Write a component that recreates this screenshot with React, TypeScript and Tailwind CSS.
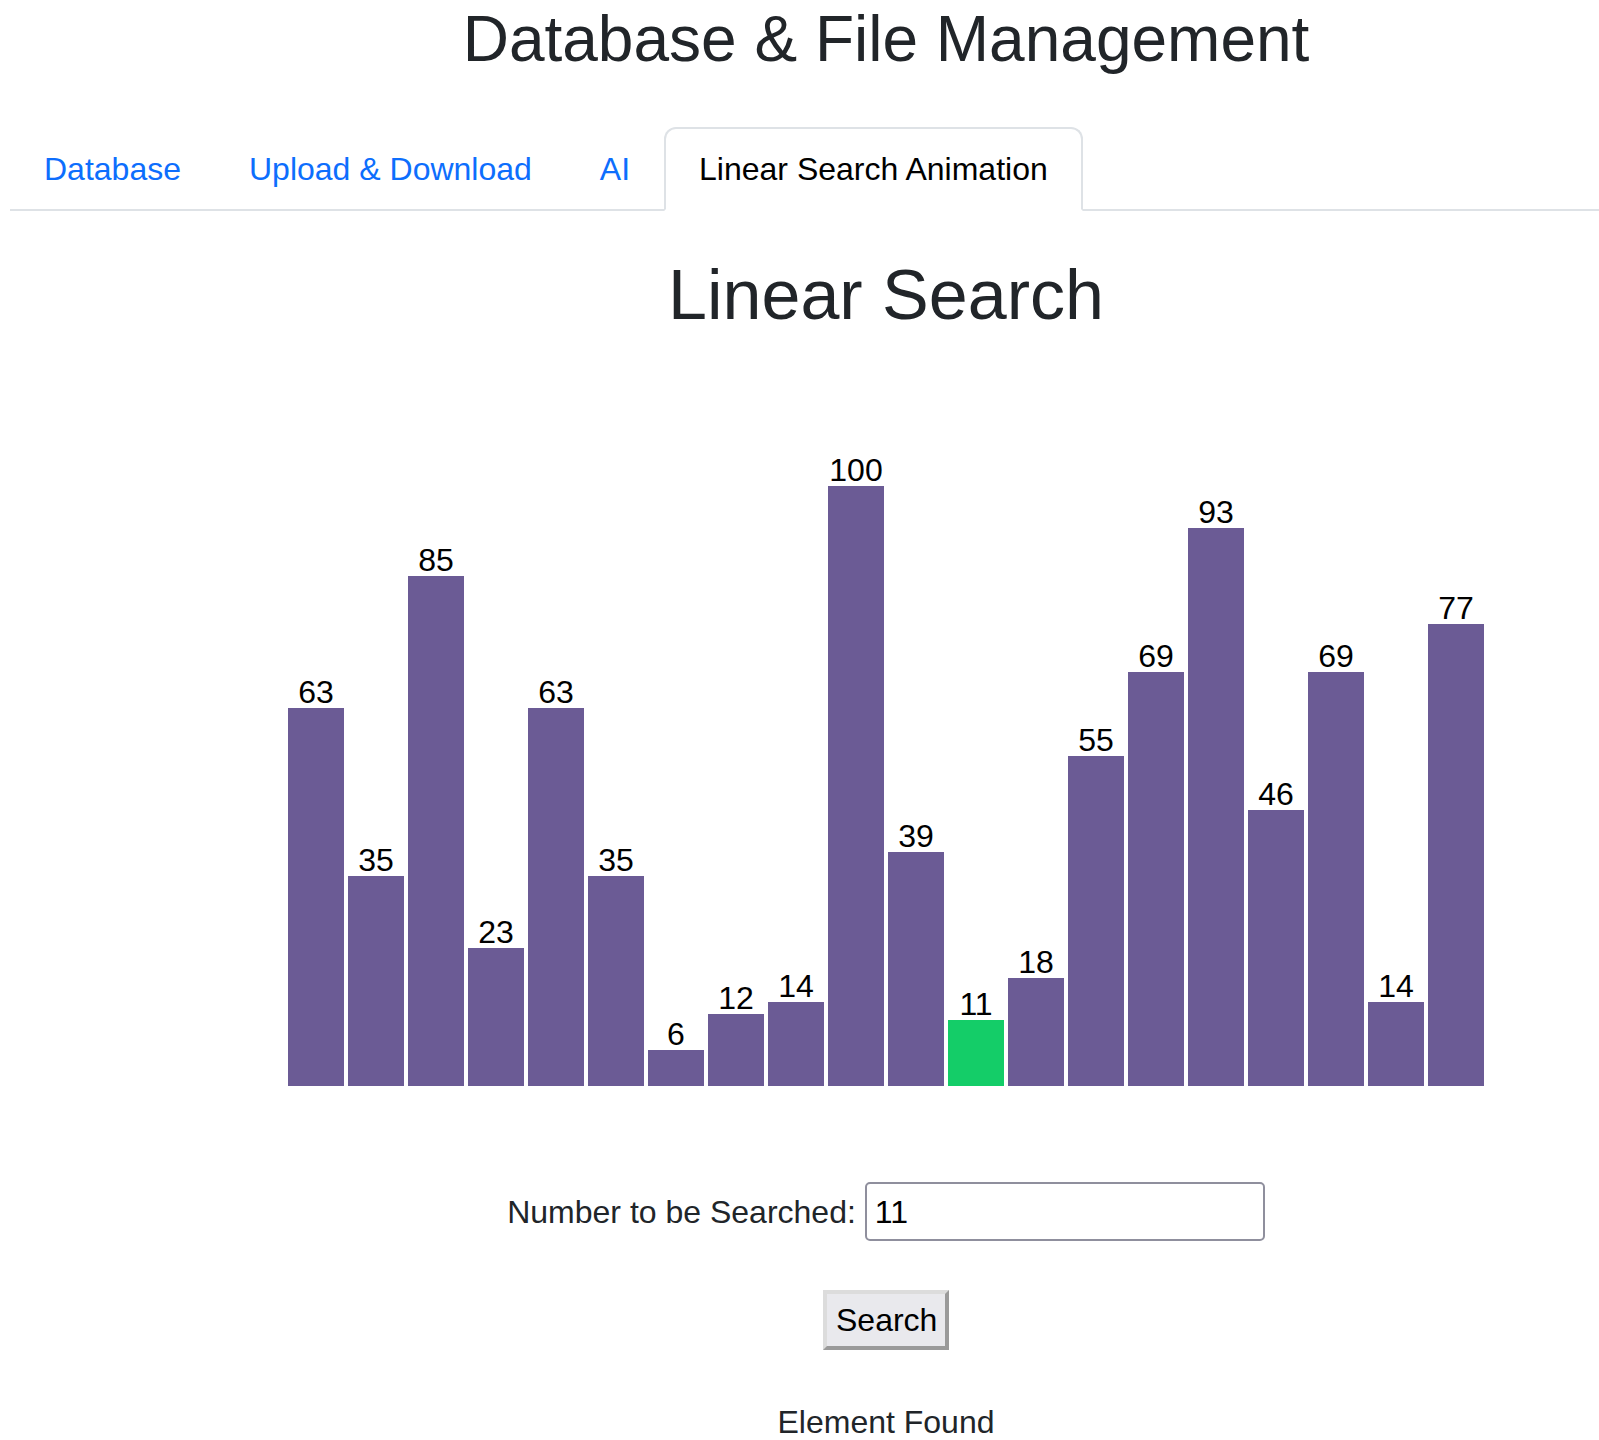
import React from "react";

const values = [63, 35, 85, 23, 63, 35, 6, 12, 14, 100, 39, 11, 18, 55, 69, 93, 46, 69, 14, 77];
const foundIndex = 11;

const tabs = [
  { label: "Database", active: false },
  { label: "Upload & Download", active: false },
  { label: "AI", active: false },
  { label: "Linear Search Animation", active: true },
];

export default function App() {
  return (
    <div
      className="w-full overflow-hidden bg-white"
      style={{ fontFamily: '"Liberation Sans", Arial, Helvetica, sans-serif' }}
    >
      <div className="w-[1772px] px-[10px] text-center text-[#212529]">
        <h1 className="pt-[1px] text-[64px] leading-[1.2] font-normal">Database &amp; File Management</h1>

        <div className="mt-[49px] flex border-b-2 border-[#dee2e6] text-left">
          {tabs.map((t) => (
            <div
              key={t.label}
              className={
                t.active
                  ? "-mb-[2px] rounded-t-[12px] border-2 border-[#dee2e6] border-b-white bg-white px-[33px] py-[16px] text-[32px] leading-[48px] text-black"
                  : "-mb-[2px] rounded-t-[12px] border-2 border-transparent px-[32px] py-[16px] text-[32px] leading-[48px] text-[#0d6efd]"
              }
            >
              {t.label}
            </div>
          ))}
        </div>

        <h2 className="mt-[42px] text-[70px] leading-[84px] font-normal">Linear Search</h2>

        <div className="flex h-[749px] items-end justify-center">
          {values.map((v, i) => (
            <div key={i} className="mx-[2px] flex w-[56px] flex-col items-center">
              <div className="text-[32px] leading-[32px] text-black">{v}</div>
              <div
                className={i === foundIndex ? "w-[56px] bg-[#14cd68]" : "w-[56px] bg-[#6b5b95]"}
                style={{ height: `${v * 6}px` }}
              />
            </div>
          ))}
        </div>

        <div className="mt-[96px] flex h-[59px] items-center justify-center gap-[9px]">
          <label className="pt-[2px] text-[32px] leading-[48px]">Number to be Searched:</label>
          <input
            type="text"
            defaultValue="11"
            className="h-[59px] w-[400px] rounded-[5px] border-2 border-[#8f8f9d] bg-white px-[8px] pt-[2px] text-[32px] text-black outline-none"
            style={{ fontFamily: '"Liberation Sans", Arial, Helvetica, sans-serif' }}
          />
        </div>

        <div className="mt-[49px] flex justify-center">
          <button
            className="h-[60px] w-[126px] border-[4px] border-t-[#dcdcdc] border-l-[#dcdcdc] border-b-[#9a9a9a] border-r-[#9a9a9a] bg-[#e9e9ed] px-[9px] text-[32px] text-black"
            style={{ fontFamily: '"Liberation Sans", Arial, Helvetica, sans-serif' }}
          >
            Search
          </button>
        </div>

        <div className="mt-[48px] text-[32px] leading-[48px]">Element Found</div>
      </div>
    </div>
  );
}
